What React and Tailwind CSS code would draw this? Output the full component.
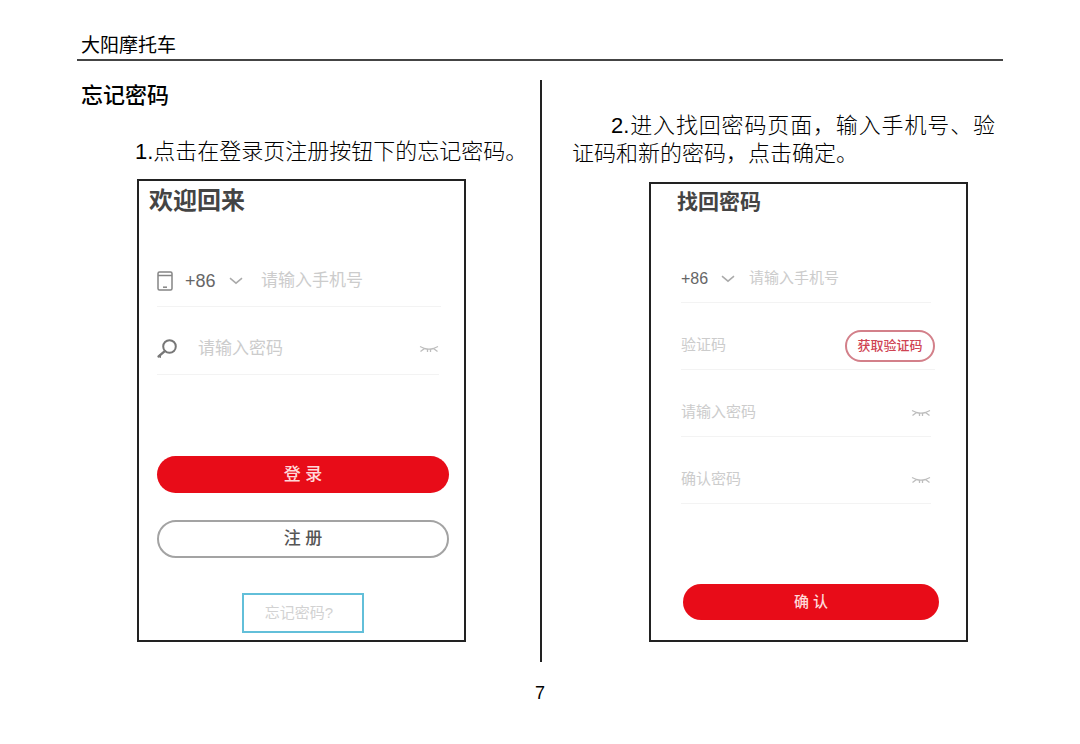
import { useState } from "react";

function PhoneIcon() {
  return (
    <svg viewBox="0 0 16 20" fill="none" className="w-4 h-5 shrink-0 stroke-[#858585]" strokeWidth="1.5">
      <rect x="1" y="1" width="14" height="18" rx="1.5" />
      <path d="M1 4.5h14" />
      <path d="M6 16.200h4" />
    </svg>
  );
}

function KeyIcon() {
  return (
    <svg viewBox="0 0 20 20" fill="none" className="w-5 h-5 shrink-0 stroke-[#777777]" strokeLinecap="round">
      <circle cx="12.5" cy="7.5" r="6.300" strokeWidth="2" />
      <path d="M7.8 12.2L1.6 17.4" strokeWidth="2.4" />
      <path d="M3.200 15.800v2.400" strokeWidth="1.6" />
    </svg>
  );
}

function ChevronIcon({ className }) {
  return (
    <svg viewBox="0 0 14 8" fill="none" className={className} strokeWidth="1.5">
      <path d="M1 1.2l6 5 6-5" />
    </svg>
  );
}

function ClosedEyeIcon() {
  return (
    <svg viewBox="0 0 20 10" fill="none" className="w-5 h-[10px] stroke-[#bdbdbd]" strokeWidth="1.3">
      <path d="M1 2.500l4.500 2c3 .8 6 .8 9 0l4.500-2" />
      <path d="M5.500 4.500L1.500 7.500M8.500 5v3M11.500 5v3M14.500 4.500l4 3" />
    </svg>
  );
}

function CountryCode({ id, className }) {
  return (
    <select
      id={id}
      aria-label="国家代码"
      defaultValue="+86"
      className={`appearance-none bg-transparent outline-none text-[#666666] shrink-0 ${className}`}
    >
      <option value="+86">+86</option>
    </select>
  );
}

function PasswordField({ placeholder, className }) {
  const [visible, setVisible] = useState(false);

  return (
    <>
      <input
        type={visible ? "text" : "password"}
        aria-label={placeholder}
        placeholder={placeholder}
        className={`flex-1 min-w-0 bg-transparent outline-none placeholder:text-[#cccccc] ${className}`}
      />
      <button type="button" aria-label="显示密码" onClick={() => setVisible(!visible)} className="shrink-0">
        <ClosedEyeIcon />
      </button>
    </>
  );
}

function LoginPanel() {
  return (
    <form className="mt-[13px] ml-[60px] mr-[74px] border-2 border-[#222222] pt-1 pb-[7px] pl-[18px] pr-[15px]">
      <h3 className="-ml-2 text-2xl leading-8 font-bold text-[#444444]">欢迎回来</h3>

      <div className="mt-[38px] mr-2 h-[52px] flex items-center border-b border-[#f3f3f3]">
        <PhoneIcon />
        <CountryCode id="login-code" className="ml-3 w-8 text-lg" />
        <ChevronIcon className="ml-3 w-[14px] h-2 shrink-0 stroke-[#aaaaaa]" />
        <input
          type="tel"
          aria-label="手机号"
          placeholder="请输入手机号"
          className="ml-[18px] flex-1 min-w-0 bg-transparent outline-none text-[17px] placeholder:text-[#cccccc]"
        />
      </div>

      <div className="mt-4 mr-[10px] h-[52px] flex items-center border-b border-[#f3f3f3]">
        <KeyIcon />
        <PasswordField placeholder="请输入密码" className="ml-[21px] text-[17px]" />
      </div>

      <button type="button" className="mt-[81px] block w-full h-[37px] rounded-full bg-[#e80c18] text-[17px] font-medium text-[#ffd9d9]">
        登 录
      </button>
      <button type="button" className="mt-[27px] block w-full h-[38px] rounded-full border-2 border-[#a3a3a3] text-[17px] font-medium text-[#555555]">
        注 册
      </button>

      <a
        href="#forgot"
        className="mt-[35px] mx-auto flex w-[122px] h-10 items-center justify-center border-2 border-[#62bfd9] pr-2 text-[15px] text-[#d2d2d2]"
      >
        忘记密码?
      </a>
    </form>
  );
}

function ResetPanel() {
  return (
    <form id="forgot" className="mt-[14px] ml-[107px] mr-[35px] border-2 border-[#222222] pt-[2px] pb-5 pl-[30px] pr-[27px]">
      <h3 className="-ml-1 text-[21px] leading-8 font-bold text-[#444444]">找回密码</h3>

      <div className="mt-[37px] mr-2 h-12 flex items-center border-b border-[#f3f3f3]">
        <CountryCode id="reset-code" className="w-7 text-base" />
        <ChevronIcon className="ml-3 w-[14px] h-2 shrink-0 stroke-[#aaaaaa]" />
        <input
          type="tel"
          aria-label="手机号"
          placeholder="请输入手机号"
          className="ml-[14px] flex-1 min-w-0 bg-transparent outline-none text-[15px] placeholder:text-[#cccccc]"
        />
      </div>

      <div className="mt-[19px] mr-1 h-12 flex items-center border-b border-[#f3f3f3]">
        <input
          type="text"
          aria-label="验证码"
          placeholder="验证码"
          className="flex-1 min-w-0 bg-transparent outline-none text-[15px] placeholder:text-[#cccccc]"
        />
        <button type="button" className="w-[90px] h-8 shrink-0 rounded-full border-2 border-[#d3808a] text-[13px] font-medium text-[#cf4352]">
          获取验证码
        </button>
      </div>

      <div className="mt-[19px] mr-2 h-12 flex items-center border-b border-[#f3f3f3]">
        <PasswordField placeholder="请输入密码" className="text-[15px]" />
      </div>
      <div className="mt-[19px] mr-2 h-12 flex items-center border-b border-[#f3f3f3]">
        <PasswordField placeholder="确认密码" className="text-[15px]" />
      </div>

      <div className="mt-20 pl-[2px]">
        <button type="button" className="block w-full h-9 rounded-full bg-[#e80c18] text-[15px] font-medium text-[#ffd9d9]">
          确 认
        </button>
      </div>
    </form>
  );
}

export default function App() {
  return (
    <div
      lang="zh-CN"
      className="bg-white px-[77px] pt-8 text-black font-['Liberation_Sans','Noto_Sans_CJK_SC',sans-serif]"
    >
      <header className="pl-1 border-b-2 border-[#444444] text-[19px] leading-[27px]">大阳摩托车</header>

      <main className="mt-[19px] grid grid-cols-2">
        <section className="pb-5">
          <h2 className="pl-1 text-[22px] leading-8 font-medium">忘记密码</h2>
          <p className="mt-[26px] pl-[58px] text-[22px] leading-7 font-light">
            1.点击在登录页注册按钮下的忘记密码。
          </p>
          <LoginPanel />
        </section>

        <section className="border-l-2 border-[#222222] pb-5 pt-8">
          <p className="ml-[30px] mr-2 text-[22px] leading-7 font-light indent-[39px] text-justify">
            2.进入找回密码页面，输入手机号、验证码和新的密码，点击确定。
          </p>
          <ResetPanel />
        </section>
      </main>

      <footer className="mt-[19px] text-center text-lg leading-6">7</footer>
    </div>
  );
}
